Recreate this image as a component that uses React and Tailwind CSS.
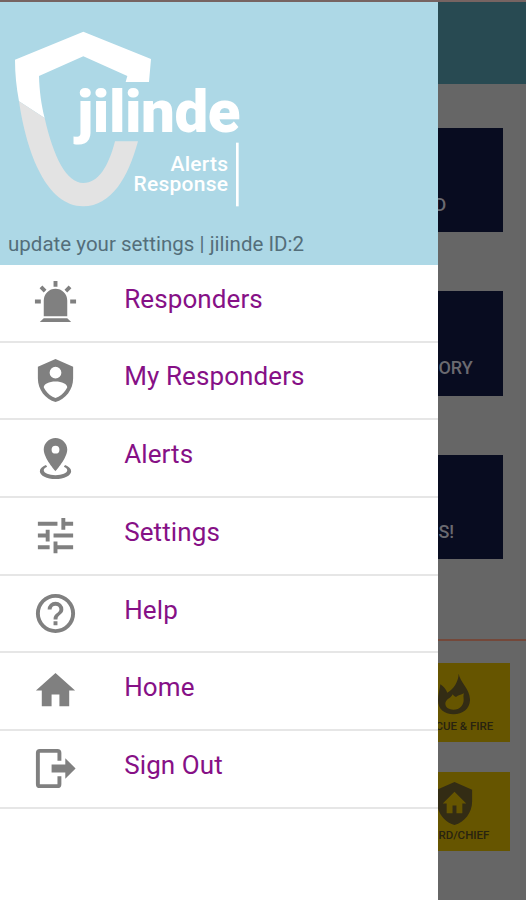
const SHIELD = 'M12,1L3,5V11C3,16.55 6.84,21.74 12,23C17.16,21.74 21,16.55 21,11V5L12,1'

const menuItems = [
  {
    label: 'Responders',
    path: 'M6,6.9L3.87,4.78L5.28,3.37L7.4,5.5L6,6.9M13,1V4H11V1H13M20.13,4.78L18,6.9L16.6,5.5L18.72,3.37L20.13,4.78M4.5,10.5V12.5H1.5V10.5H4.5M19.5,10.5H22.5V12.5H19.5V10.5M6,20H18L20,22H4L6,20M12,5A6,6 0 0,1 18,11V19H6V11A6,6 0 0,1 12,5Z'
  },
  {
    label: 'My Responders',
    path: SHIELD + 'M12,5A3,3 0 0,1 15,8A3,3 0 0,1 12,11A3,3 0 0,1 9,8A3,3 0 0,1 12,5M17.13,17C15.92,18.85 14.11,20.24 12,20.92C9.89,20.24 8.08,18.85 6.87,17C6.53,16.5 6.24,16 6,15.47C6,13.82 8.71,12.47 12,12.47C15.29,12.47 18,13.79 18,15.47C17.76,16 17.47,16.5 17.13,17Z'
  },
  {
    label: 'Alerts',
    path: 'M12,2C15.31,2 18,4.66 18,7.95C18,12.41 12,19 12,19C12,19 6,12.41 6,7.95C6,4.66 8.69,2 12,2M12,6A2,2 0 0,0 10,8A2,2 0 0,0 12,10A2,2 0 0,0 14,8A2,2 0 0,0 12,6M20,19C20,21.21 16.42,23 12,23C7.58,23 4,21.21 4,19C4,17.71 5.22,16.56 7.11,15.83L7.75,16.74C6.67,17.19 6,17.81 6,18.5C6,19.88 8.69,21 12,21C15.31,21 18,19.88 18,18.5C18,17.81 17.33,17.19 16.25,16.74L16.89,15.83C18.78,16.56 20,17.71 20,19Z'
  },
  {
    label: 'Settings',
    path: 'M3,17V19H9V17H3M3,5V7H13V5H3M13,21V19H21V17H13V15H11V21H13M7,9V11H3V13H7V15H9V9H7M21,13V11H11V13H21M15,9H17V7H21V5H17V3H15V9Z'
  },
  {
    label: 'Help',
    path: 'M11,18H13V16H11V18M12,2A10,10 0 0,0 2,12A10,10 0 0,0 12,22A10,10 0 0,0 22,12A10,10 0 0,0 12,2M12,20C7.59,20 4,16.41 4,12C4,7.59 7.59,4 12,4C16.41,4 20,7.59 20,12C20,16.41 16.41,20 12,20M12,6A4,4 0 0,0 8,10H10A2,2 0 0,1 12,8A2,2 0 0,1 14,10C14,12 11,11.75 11,15H13C13,12.75 16,12.5 16,10A4,4 0 0,0 12,6Z'
  },
  { label: 'Home', path: 'M10,20V14H14V20H19V12H22L12,3L2,12H5V20H10Z' },
  {
    label: 'Sign Out',
    path: 'M17,17.25V14H10V10H17V6.75L22.25,12L17,17.25M13,2A2,2 0 0,1 15,4V8H13V4H4V20H13V16H15V20A2,2 0 0,1 13,22H4A2,2 0 0,1 2,20V4A2,2 0 0,1 4,2H13Z'
  }
]

function Icon({ path, className }) {
  return (
    <svg viewBox="0 0 24 24" fill="currentColor" fillRule="evenodd" className={className}>
      <path d={path} />
    </svg>
  )
}

function Logo() {
  return (
    <svg viewBox="0 0 260 215" className="block h-[215px] w-[260px]">
      <g transform="translate(0 -2) scale(.33333)">
        <path fill="#fff" d="M250 95L453 177L447 246H377L382 228L250 169L117 228C118 271 124 316 134 354L57 304C49 261 45 221 45 179Z" />
        <path fill="#e3e3e3" d="M57 304L134 354C160 471 200 549 250 549C295 549 325 501 345 424H414C385 531 335 619 250 619C140 619 80 461 57 304Z" />
        <path fill="#fff" d="M708 428H716V619H708Z" />
      </g>
      <g fill="#fff" className="font-[Roboto,sans-serif]">
        <text x="77" y="130" textLength="163.500" className="text-[60px] font-black">jilinde</text>
        <text x="228" y="168.500" textAnchor="end" textLength="57.500" className="text-[21px] font-medium">Alerts</text>
        <text x="228" y="189" textAnchor="end" textLength="94.500" className="text-[21px] font-medium">Response</text>
      </g>
    </svg>
  )
}

export default function App() {
  return (
    <div className="flex h-[900px] w-[526px] flex-col overflow-hidden bg-[#666] font-[Roboto,sans-serif]">
      <div className="h-[2px] shrink-0 bg-[#776462]" />
      <div className="flex min-h-0 flex-1">
        {/* Drawer */}
        <aside className="flex w-[438.400px] shrink-0 flex-col bg-white">
          <header className="flex h-[263px] shrink-0 flex-col bg-[#add8e6]">
            <Logo />
            <p className="pl-2 pt-[14px] text-[20.500px] leading-[26px] tracking-[0.02px] text-[#546e7a]">update your settings | jilinde ID:2</p>
          </header>
          <nav>
            {menuItems.map(item => (
              <a key={item.label} className="flex h-[77.700px] items-start border-b-2 border-[#e6e6e6] pl-[31.500px]">
                <Icon path={item.path} className="mt-[14px] size-[47px] text-[#808080]" />
                <span className="ml-[45.700px] mt-[17.800px] text-[26px] leading-[32px] tracking-[0.100px] text-[#861086]">{item.label}</span>
              </a>
            ))}
          </nav>
        </aside>

        {/* Dimmed page beside the drawer */}
        <main className="min-w-0 flex-1 overflow-hidden">
          <div className="h-[82px] bg-[#284a52]" />
          <div className="flex flex-col gap-[59px] pt-[44px] text-[18px] font-medium leading-[22px] text-[#6a6a70]">
            <div className="flex h-[104.400px] w-[65px] items-end overflow-hidden bg-[#080c20] pb-[16.500px]">
              <span className="-ml-[4px]">D</span>
            </div>
            <div className="flex h-[104.400px] w-[65px] items-end overflow-hidden bg-[#080c20] pb-[16.500px]">ORY</div>
            <div className="flex h-[104.400px] w-[65px] items-end overflow-hidden bg-[#080c20] pb-[16.500px]">S!</div>
          </div>
          <div className="mt-[79.800px] h-[2px] bg-[#74483a]" />
          <div className="mt-[22px] flex flex-col gap-[30px] text-[11.500px] font-medium leading-[14px] text-[#282310]">
            <div className="h-[79px] w-[72px] overflow-hidden bg-[#665500]">
              <svg viewBox="0 0 96 126" fill="currentColor" fillRule="evenodd" className="mt-[10px] h-[42px] w-[32px] text-[#332c14]">
                <path d="M62 2C66 28 97 48 96 82C95 108 74 124 47 124C18 124 0 108 0 82C0 65 5 52 7 34C17 41 24 49 28 59C46 48 61 28 62 2ZM44 64C38 77 22 78 22 93C23 104 34 110 46 110C66 110 77 96 77 80C77 74 75 68 78 61C69 65 60 67 54 72C50 71 47 68 44 64Z" />
              </svg>
              <p className="mt-[4px] -ml-[3px] whitespace-nowrap">CUE &amp; FIRE</p>
            </div>
            <div className="h-[79px] w-[72px] overflow-hidden bg-[#665500]">
              <Icon path={SHIELD + 'M11,13H13V17H16V12H18L12,6L6,12H8V17H11V13Z'} className="-ml-[7.500px] mt-[8px] size-[47px] text-[#332c14]" />
              <p className="mt-px whitespace-nowrap">RD/CHIEF</p>
            </div>
          </div>
        </main>
      </div>
    </div>
  )
}
